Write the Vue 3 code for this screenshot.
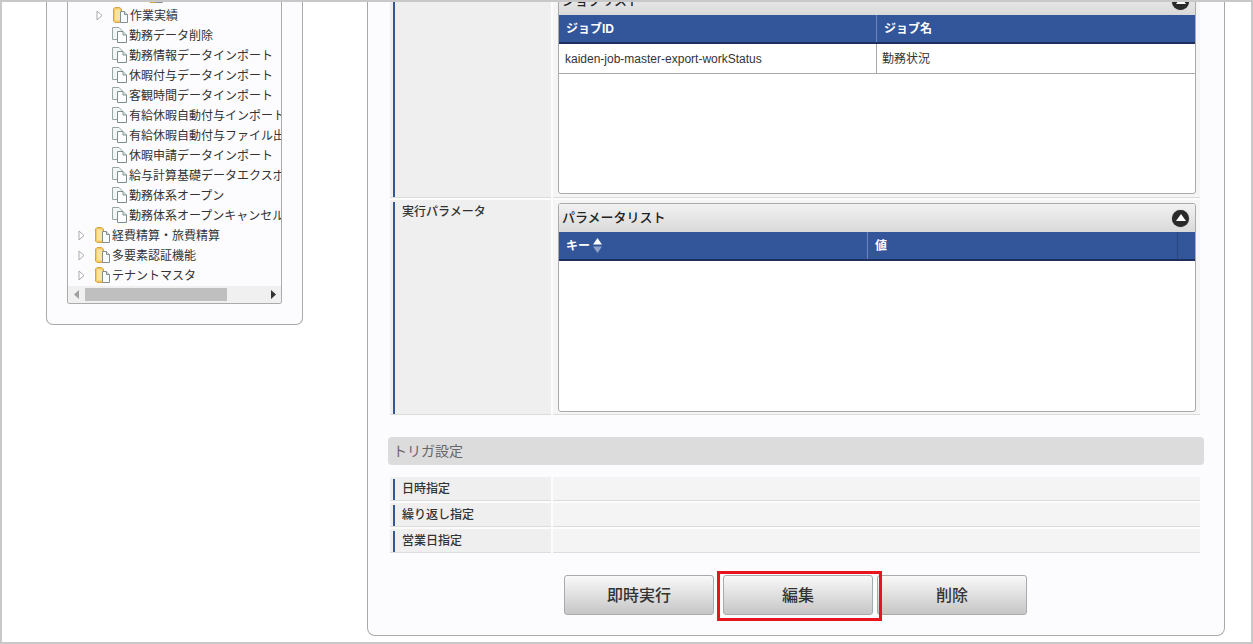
<script setup>
const treeRows = [
  { cls: 'lv-cut', kind: 'folder', text: '', arrow: false },
  { cls: 'lv-2', kind: 'folder', text: '作業実績', arrow: true },
  { cls: 'lv-leaf', kind: 'leaf', text: '勤務データ削除' },
  { cls: 'lv-leaf', kind: 'leaf', text: '勤務情報データインポート' },
  { cls: 'lv-leaf', kind: 'leaf', text: '休暇付与データインポート' },
  { cls: 'lv-leaf', kind: 'leaf', text: '客観時間データインポート' },
  { cls: 'lv-leaf', kind: 'leaf', text: '有給休暇自動付与インポート' },
  { cls: 'lv-leaf', kind: 'leaf', text: '有給休暇自動付与ファイル出力' },
  { cls: 'lv-leaf', kind: 'leaf', text: '休暇申請データインポート' },
  { cls: 'lv-leaf', kind: 'leaf', text: '給与計算基礎データエクスポート' },
  { cls: 'lv-leaf', kind: 'leaf', text: '勤務体系オープン' },
  { cls: 'lv-leaf', kind: 'leaf', text: '勤務体系オープンキャンセル' },
  { cls: 'lv-1', kind: 'folder', text: '経費精算・旅費精算', arrow: true },
  { cls: 'lv-1', kind: 'folder', text: '多要素認証機能', arrow: true },
  { cls: 'lv-1', kind: 'folder', text: 'テナントマスタ', arrow: true }
]
const triggers = ['日時指定', '繰り返し指定', '営業日指定']
</script>

<template>
  <div class="frame">
    <aside class="side">
      <div class="tree">
        <div class="tree-rows">
          <div v-for="(r, i) in treeRows" :key="i" class="tree-row" :class="r.cls">
            <span v-if="r.kind === 'folder'" class="twist">
              <svg v-if="r.arrow" width="7" height="11" viewBox="0 0 7 11"><path d="M1 1 L6 5.5 L1 10 Z" fill="#fff" stroke="#a9a9a9" /></svg>
            </span>
            <span class="ico">
              <svg v-if="r.kind === 'folder'" width="15" height="16" viewBox="0 0 15 16">
                <path d="M0.5 2 L2 0.5 L6.5 0.5 L8.5 2 L8.5 15.5 L2 15.5 L0.5 14 Z" fill="#f0c964" stroke="#d8a544" />
                <path d="M2 2.5 L7 2.5 L7 13.5 L2 13.5 Z" fill="#f9e3a0" />
                <path d="M7.5 4.5 L11.5 4.5 L14.5 7.5 L14.5 15.5 L7.5 15.5 Z" fill="#f8fbfb" stroke="#84908f" />
                <path d="M11.5 4.5 L11.5 7.5 L14.5 7.5" fill="#dfe8e8" stroke="#84908f" />
              </svg>
              <svg v-else width="15" height="16" viewBox="0 0 15 16">
                <path d="M0.5 0.5 L7 0.5 L10.5 4 L10.5 12.5 L0.5 12.5 Z" fill="#f1f5f5" stroke="#98a6a6" />
                <path d="M5.5 4.5 L11 4.5 L14.5 8 L14.5 15.5 L5.5 15.5 Z" fill="#fff" stroke="#7d8e8e" />
                <path d="M11 4.5 L11 8 L14.5 8" fill="#dfe8e8" stroke="#7d8e8e" />
              </svg>
            </span>
            <span class="tree-text">{{ r.text }}</span>
          </div>
        </div>
        <div class="hscroll">
          <svg class="sb-arrow" width="5" height="9" viewBox="0 0 5 9"><path d="M5 0 L0 4.5 L5 9 Z" fill="#a0a0a0" /></svg>
          <div class="sb-thumb"></div>
          <svg class="sb-arrow sb-right" width="5" height="9" viewBox="0 0 5 9"><path d="M0 0 L5 4.5 L0 9 Z" fill="#333" /></svg>
        </div>
      </div>
    </aside>

    <main class="panel">
      <div class="row row-jobs">
        <div class="lab"><div class="lab-in"></div></div>
        <div class="val">
          <div class="listbox box-jobs">
            <div class="list-title">
              <span class="title-text">ジョブリスト</span>
              <span class="toggle"><i></i></span>
            </div>
            <div class="thead">
              <div class="th th-id">ジョブID</div>
              <div class="th th-name">ジョブ名</div>
            </div>
            <div class="tr">
              <div class="td td-id">kaiden-job-master-export-workStatus</div>
              <div class="td td-name">勤務状況</div>
            </div>
          </div>
        </div>
      </div>

      <div class="row row-params">
        <div class="lab"><div class="lab-in">実行パラメータ</div></div>
        <div class="val">
          <div class="listbox box-params">
            <div class="list-title">
              <span class="title-text">パラメータリスト</span>
              <span class="toggle"><i></i></span>
            </div>
            <div class="thead">
              <div class="th th-key">キー
                <svg class="sort" width="9" height="15" viewBox="0 0 9 15">
                  <path d="M4.5 0 L9 6.5 L0 6.5 Z" fill="#fff" />
                  <path d="M0 8.5 L9 8.5 L4.5 15 Z" fill="#8fa3c8" />
                </svg>
              </div>
              <div class="th th-value">値</div>
              <div class="th th-end"></div>
            </div>
          </div>
        </div>
      </div>

      <h2 class="section">トリガ設定</h2>

      <div class="triggers">
        <div v-for="t in triggers" :key="t" class="row row-trigger">
          <div class="lab"><div class="lab-in">{{ t }}</div></div>
          <div class="val"></div>
        </div>
      </div>

      <div class="actions">
        <button class="btn" type="button">即時実行</button>
        <div class="btn-mark">
          <button class="btn" type="button">編集</button>
          <div class="redbox"></div>
        </div>
        <button class="btn" type="button">削除</button>
      </div>
    </main>
  </div>
</template>

<style>
html, body { margin: 0; background: #fff; }
</style>

<style scoped>
.frame {
  box-sizing: border-box;
  width: 1253px;
  height: 644px;
  border: 2px solid #c8c8c8;
  background: #fff;
  display: flex;
  align-items: flex-start;
  overflow: hidden;
  font-family: "Liberation Sans", "Noto Sans CJK JP", sans-serif;
  font-size: 12px;
  color: #333;
}

/* left tree */
.side {
  box-sizing: border-box;
  width: 257px;
  height: 323px;
  margin-left: 44px;
  padding: 0 20px;
  background: #fcfcff;
  border: 1px solid #aaa;
  border-top: 0;
  border-radius: 0 0 7px 7px;
}
.tree {
  box-sizing: border-box;
  width: 215px;
  height: 302px;
  border: 1px solid #aaa;
  border-top: 0;
  border-radius: 0 0 3px 3px;
  display: flex;
  flex-direction: column;
  overflow: hidden;
}
.tree-rows { margin-top: -17px; }
.tree-row {
  height: 20px;
  display: flex;
  align-items: center;
  white-space: nowrap;
  overflow: hidden;
}
.lv-cut { padding-left: 63px; }
.lv-1 { padding-left: 10px; }
.lv-2 { padding-left: 28px; }
.lv-leaf { padding-left: 44px; }
.twist { width: 17px; flex: none; display: flex; align-items: center; }
.ico { width: 17px; height: 16px; flex: none; display: block; }
.ico svg, .twist svg { display: block; }
.tree-text { line-height: 20px; padding-top: 2px; }
.hscroll {
  height: 17px;
  margin-top: 1px;
  background: #f0f0f0;
  display: flex;
  align-items: center;
  padding-left: 6px;
  flex: none;
}
.sb-thumb {
  width: 142px;
  height: 13px;
  margin-left: 6px;
  background: #bfbfbf;
}
.sb-right { margin-left: 44px; }

/* right panel */
.panel {
  box-sizing: border-box;
  width: 858px;
  height: 634px;
  margin-left: 64px;
  padding: 0 20px;
  background: #fcfcff;
  border: 1px solid #aaa;
  border-top: 0;
  border-radius: 0 0 8px 8px;
}
.row {
  display: flex;
  margin: 0 4px 0 2px;
  column-gap: 2px;
}
.row-jobs { height: 196px; margin-bottom: 2px; }
.row-params { height: 215px; }
.lab, .val {
  box-sizing: border-box;
  border-bottom: 1px solid #dcdcdc;
}
.lab {
  width: 161px;
  flex: none;
  padding: 2px 0 0 3px;
  background: #efefef;
}
.lab-in {
  box-sizing: border-box;
  height: 100%;
  padding-left: 7px;
  border-left: 2px solid #335599;
  font-weight: 500;
  line-height: 20px;
}
.row-jobs .lab { padding-top: 0; }
.val { flex: 1; background: #f5f5f5; padding: 3px 4px 0 5px; }
.row-jobs .val { padding-top: 0; }

.listbox {
  box-sizing: border-box;
  width: 638px;
  background: #fff;
  border: 1px solid #aaa;
  border-radius: 3px;
  overflow: hidden;
}
.box-jobs { height: 208px; margin-top: -16px; }
.box-params { height: 209px; }
.list-title {
  height: 28px;
  padding: 0 6px 0 3px;
  display: flex;
  align-items: center;
  justify-content: space-between;
  font-size: 13px;
  font-weight: 500;
  color: #222;
  background: linear-gradient(#f2f2f2, #d9d9d9);
}
.title-text { padding-bottom: 4px; }
.toggle {
  width: 17px;
  height: 17px;
  border-radius: 50%;
  background: #2a2a2a;
  box-shadow: 0 0 1px #777;
  display: flex;
  align-items: center;
  justify-content: center;
}
.toggle i {
  width: 0;
  height: 0;
  border-left: 5px solid transparent;
  border-right: 5px solid transparent;
  border-bottom: 7px solid #fff;
  margin-top: -1px;
}
.thead {
  height: 29px;
  box-sizing: border-box;
  display: flex;
  background: #335599;
  border-bottom: 2px solid #1e2f5e;
  color: #fff;
  font-weight: 700;
}
.th {
  box-sizing: border-box;
  height: 27px;
  line-height: 27px;
  padding: 2px 0 0 7px;
  border-right: 1px solid #6a86bd;
  display: flex;
  align-items: center;
}
.th-id { width: 318px; }
.th-name { flex: 1; border-right: 0; }
.th-key { width: 309px; }
.th-value { width: 310px; border-right-color: #2a4680; }
.th-end { flex: 1; border-right: 0; padding: 0; }
.sort { margin: -2px 0 0 3px; }
.tr {
  box-sizing: border-box;
  height: 30px;
  display: flex;
  border-bottom: 1px solid #aaa;
}
.td {
  box-sizing: border-box;
  line-height: 31px;
  padding-left: 6px;
}
.td-id { width: 318px; border-right: 1px solid #aaa; }
.td-name { padding-left: 5px; }

.section {
  margin: 22px 0 12px;
  height: 28px;
  padding-left: 5px;
  border-radius: 4px;
  background: #dcdcdc;
  font-size: 14px;
  font-weight: 400;
  line-height: 28px;
  color: #666;
}
.triggers { display: flex; flex-direction: column; row-gap: 2px; }
.row-trigger { height: 24px; }
.row-trigger .val { padding: 0; background: #f4f4f4; }
.row-trigger .lab-in { line-height: 20px; }

.actions {
  display: flex;
  align-items: flex-start;
  margin-top: 22px;
  padding-left: 176px;
}
.btn {
  box-sizing: border-box;
  width: 150px;
  height: 40px;
  padding: 0 0 2px;
  border: 1px solid #aaa;
  border-radius: 3px;
  background: linear-gradient(#f9f9f9, #c6c6c6);
  font-family: inherit;
  font-size: 16px;
  font-weight: 500;
  color: #333;
  display: block;
}
.btn-mark { position: relative; margin: 0 4px 0 9px; }
.redbox {
  position: absolute;
  top: -4px;
  left: -6px;
  right: -9px;
  bottom: -6px;
  border: 3px solid #e8141e;
  z-index: 2;
}
</style>
